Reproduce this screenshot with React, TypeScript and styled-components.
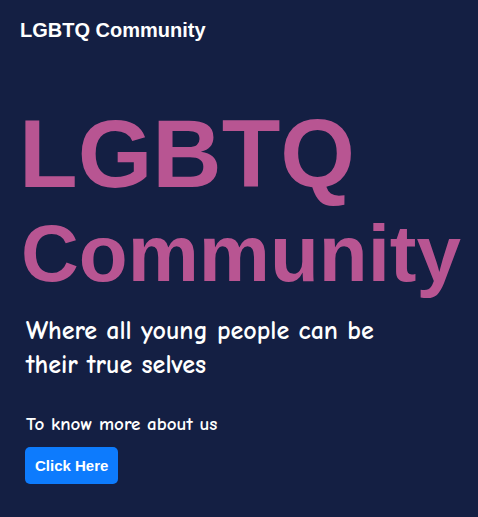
import React from "react";
import styled, { createGlobalStyle } from "styled-components";

const Global = createGlobalStyle`
  html, body {
    margin: 0;
    padding: 0;
    background: #141f43;
  }
  body {
    font-family: "Liberation Sans", Arial, sans-serif;
    color: #ffffff;
  }
`;

const Page = styled.div`
  width: 478px;
  min-height: 517px;
  background: #141f43;
  display: flex;
  flex-direction: column;
`;

const NavBar = styled.header`
  padding: 18px 20px 0;
  height: 42px;
  box-sizing: border-box;
`;

const Brand = styled.div`
  font-family: "Liberation Sans", Arial, sans-serif;
  font-weight: 700;
  font-size: 20px;
  line-height: 24px;
  color: #ffffff;
`;

const Hero = styled.section`
  display: flex;
  flex-direction: column;
  align-items: flex-start;
  padding: 59px 20px 0 19px;
`;

const Title = styled.h1`
  margin: 0;
  font-family: "Liberation Sans", Arial, sans-serif;
  font-weight: 700;
  color: #b85592;
  display: flex;
  flex-direction: column;
`;

const TitleLine = styled.span<{ $size: number; $lh: number; $shift?: number }>`
  font-size: ${(p) => p.$size}px;
  line-height: ${(p) => p.$lh}px;
  margin-left: ${(p) => p.$shift ?? 0}px;
`;

const Tagline = styled.p`
  margin: 13px 0 0 7px;
  font-family: "Comic Sans MS", "Comic Neue", "Noto Sans", sans-serif;
  font-weight: 700;
  font-size: 26px;
  line-height: 34px;
  color: #ffffff;
  max-width: 395px;
`;

const Lead = styled.p`
  margin: 30px 0 0 7px;
  font-family: "Comic Sans MS", "Comic Neue", "Noto Sans", sans-serif;
  font-weight: 700;
  font-size: 19px;
  line-height: 25px;
  color: #ffffff;
`;

const Button = styled.button`
  margin: 10px 0 0 6px;
  font-family: "Liberation Sans", Arial, sans-serif;
  font-weight: 700;
  font-size: 15px;
  line-height: 23px;
  padding: 7px 10px;
  color: #ffffff;
  background: #0d7bfd;
  border: none;
  border-radius: 5px;
  cursor: pointer;
`;

export default function App() {
  return (
    <>
      <Global />
      <Page>
        <NavBar>
          <Brand>LGBTQ Community</Brand>
        </NavBar>
        <Hero>
          <Title>
            <TitleLine $size={96} $lh={106}>LGBTQ</TitleLine>
            <TitleLine $size={80} $lh={94} $shift={2}>Community</TitleLine>
          </Title>
          <Tagline>Where all young people can be their true selves</Tagline>
          <Lead>To know more about us</Lead>
          <Button>Click Here</Button>
        </Hero>
      </Page>
    </>
  );
}
